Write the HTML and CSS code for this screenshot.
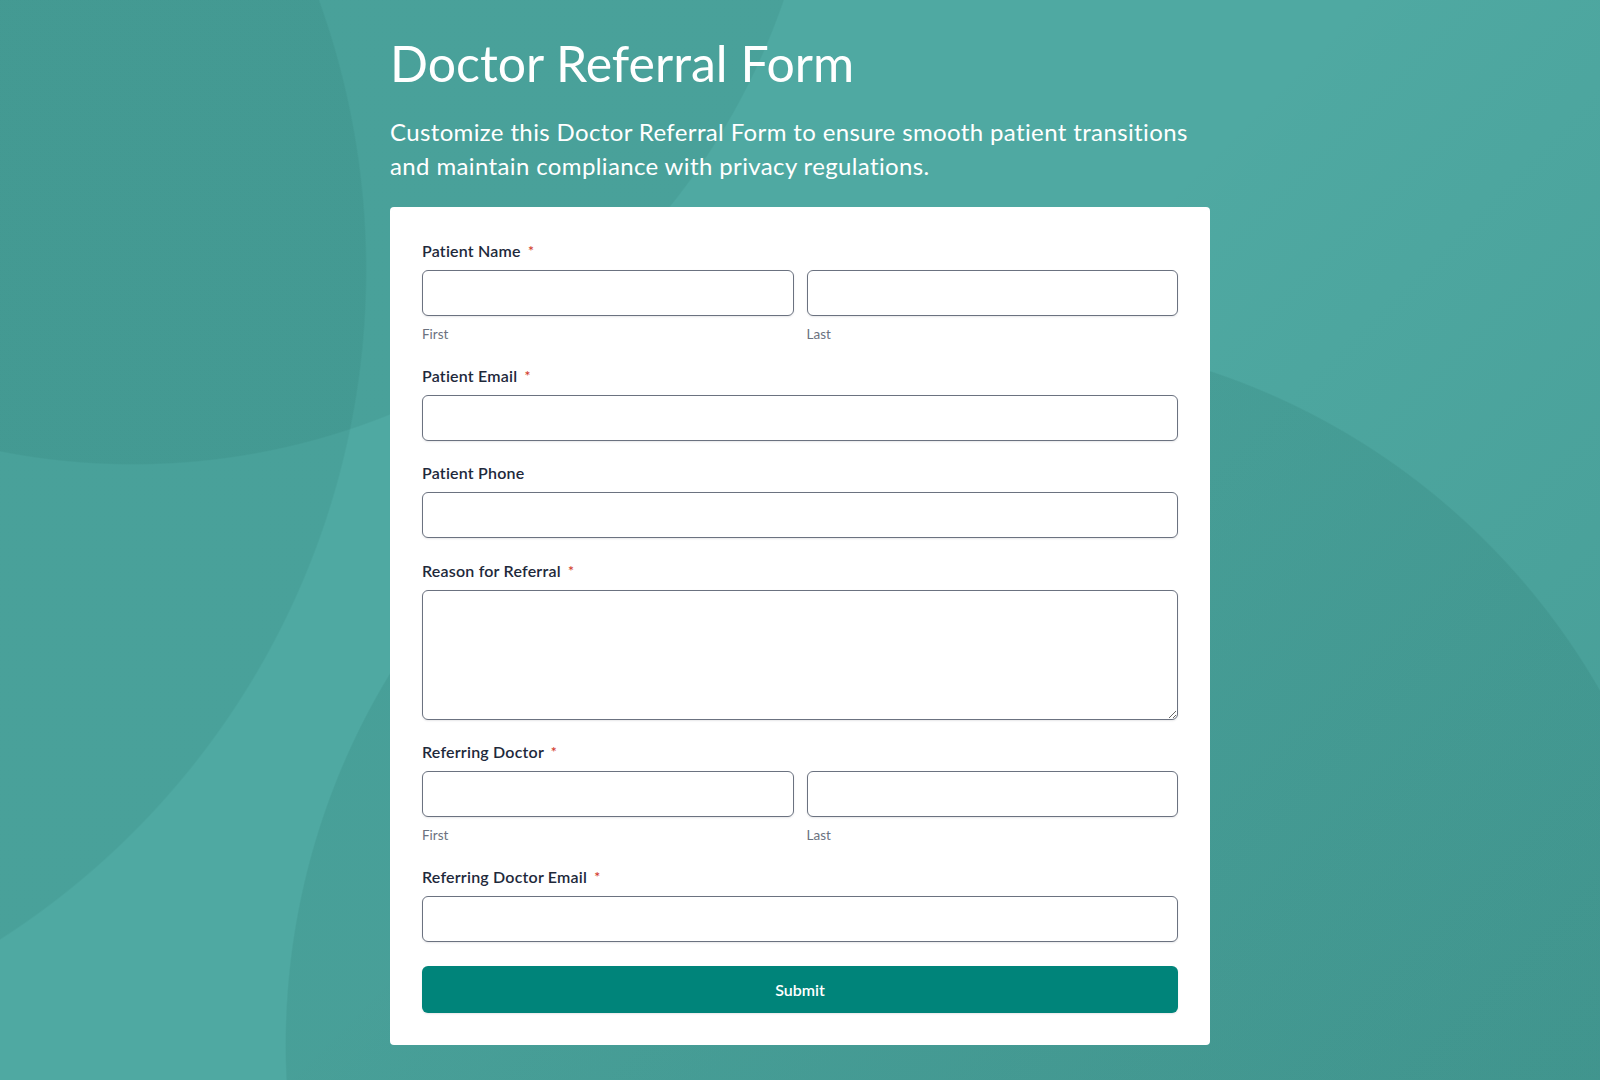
FILE: index.html
```html
<!DOCTYPE html>
<html lang="en">
<head>
<meta charset="utf-8">
<title>Doctor Referral Form</title>
<link rel="stylesheet" href="styles.css">
</head>
<body>
<div class="bg"></div>
<main class="page">
  <h1 class="title">Doctor Referral Form</h1>
  <p class="intro">Customize this Doctor Referral Form to ensure smooth patient transitions and maintain compliance with privacy regulations.</p>
  <form class="card">
    <div class="field">
      <label class="label">Patient Name <span class="req">*</span></label>
      <div class="pair">
        <div class="col"><input class="input" type="text"><span class="sub">First</span></div>
        <div class="col"><input class="input" type="text"><span class="sub">Last</span></div>
      </div>
    </div>
    <div class="field">
      <label class="label">Patient Email <span class="req">*</span></label>
      <input class="input" type="email">
    </div>
    <div class="field">
      <label class="label">Patient Phone</label>
      <input class="input" type="tel">
    </div>
    <div class="field">
      <label class="label">Reason for Referral <span class="req">*</span></label>
      <textarea class="input area"></textarea>
    </div>
    <div class="field">
      <label class="label">Referring Doctor <span class="req">*</span></label>
      <div class="pair">
        <div class="col"><input class="input" type="text"><span class="sub">First</span></div>
        <div class="col"><input class="input" type="text"><span class="sub">Last</span></div>
      </div>
    </div>
    <div class="field">
      <label class="label">Referring Doctor Email <span class="req">*</span></label>
      <input class="input" type="email">
    </div>
    <button class="submit" type="button">Submit</button>
  </form>
</main>
</body>
</html>
```

FILE: styles.css
```css
* { box-sizing: border-box; }
html, body { margin: 0; padding: 0; }
body {
  font-family: Lato, "Open Sans", sans-serif;
  background: #4fa9a2;
  min-height: 1080px;
  position: relative;
  overflow: hidden;
}
.bg {
  position: absolute;
  inset: 0;
  z-index: 0;
  background:
    radial-gradient(circle 689px at 133px -224px, rgba(20,90,82,0.10) 99.8%, transparent 100%),
    radial-gradient(circle 796px at -429px 270px, rgba(20,90,82,0.10) 99.8%, transparent 100%),
    radial-gradient(ellipse 705px 710px at 990px 1045px, rgba(20,90,82,0.12) 99.8%, transparent 100%),
    linear-gradient(135deg, rgba(0,0,0,0) 50%, rgba(10,70,64,0.12) 100%);
}
.page {
  position: relative;
  z-index: 1;
  width: 820px;
  margin: 0 auto;
  padding-top: 33px;
  padding-bottom: 35px;
}
.title {
  margin: 0;
  font-size: 50px;
  line-height: 60px;
  font-weight: 400;
  color: #ffffff;
}
.intro {
  margin: 22px 0 24px;
  font-size: 24px;
  line-height: 34px;
  letter-spacing: 0.37px;
  color: #ffffff;
  font-weight: 400;
}
.card {
  background: #ffffff;
  border-radius: 4px;
  padding: 32px;
  display: flex;
  flex-direction: column;
  gap: 20.5px;
}
.field {
  display: flex;
  flex-direction: column;
}
.label {
  font-size: 16px;
  line-height: 23px;
  font-weight: 600;
  letter-spacing: 0.2px;
  color: #1e293b;
  margin-bottom: 8px;
}
.req {
  color: #d23b2c;
  font-size: 14px;
  margin-left: 3px;
  vertical-align: 1px;
}
.pair {
  display: flex;
  gap: 13px;
}
.col {
  flex: 1;
  display: flex;
  flex-direction: column;
}
.input {
  display: block;
  width: 100%;
  height: 46px;
  border: 1px solid #6b7280;
  border-radius: 6px;
  background: #fff;
  box-shadow: 0 1px 2px rgba(15,23,42,0.10);
  font-family: inherit;
  font-size: 16px;
  padding: 0 12px;
  margin: 0;
  outline: none;
}
.area {
  height: 130px;
  resize: vertical;
  padding: 10px 12px;
}
.sub {
  margin-top: 9px;
  font-size: 13.5px;
  line-height: 18px;
  color: #6b7280;
}
.submit {
  margin-top: 3.5px;
  height: 47px;
  width: 100%;
  border: none;
  border-radius: 6px;
  background: #00847a;
  color: #ffffff;
  font-family: inherit;
  font-size: 16px;
  font-weight: 600;
  box-shadow: 0 1px 2px rgba(15,23,42,0.10);
}
```
